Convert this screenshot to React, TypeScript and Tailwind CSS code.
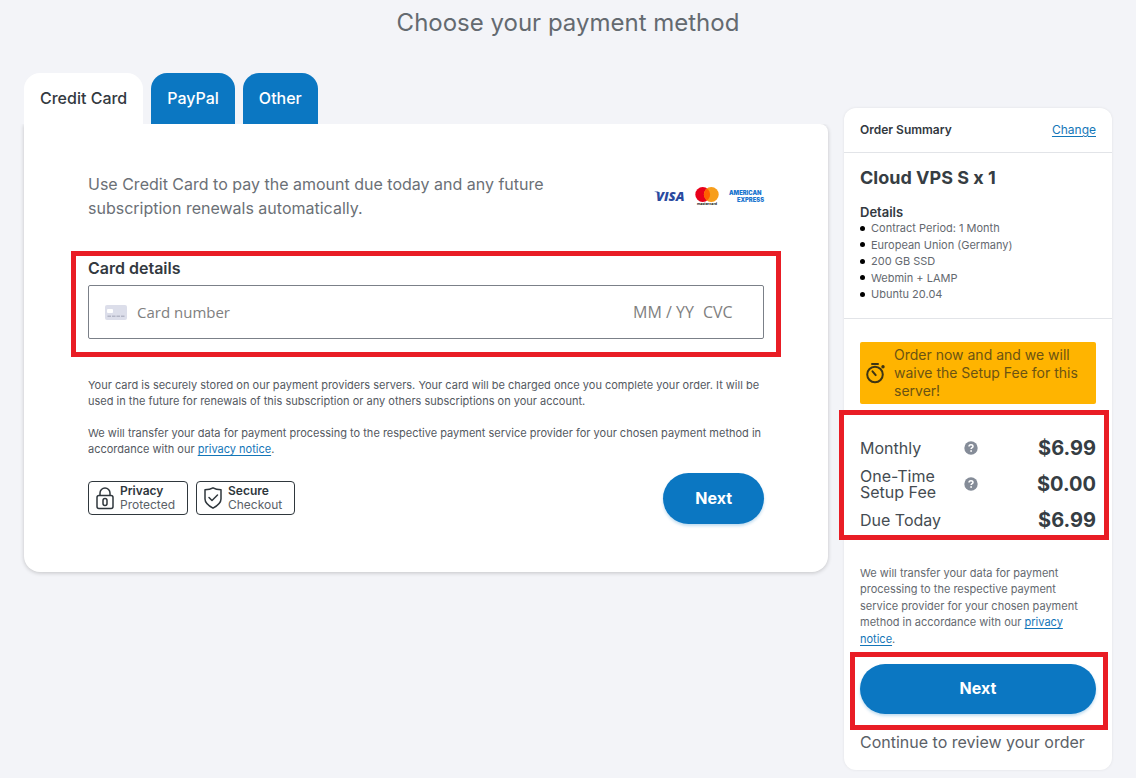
import type { ReactNode } from "react";
import clsx from "clsx";

const tabs = ["Credit Card", "PayPal", "Other"];

const details = [
  "Contract Period: 1 Month",
  "European Union (Germany)",
  "200 GB SSD",
  "Webmin + LAMP",
  "Ubuntu 20.04",
];

function Highlight({ className }: { className: string }) {
  return (
    <span
      aria-hidden="true"
      className={clsx("pointer-events-none absolute z-10 border-5 border-[#e91d25]", className)}
    />
  );
}

function VisaLogo() {
  return (
    <svg width="31" height="12" viewBox="0 0 31 12" aria-label="Visa" role="img" className="overflow-visible">
      <text
        x="2"
        y="11"
        fontFamily="'Open Sans', sans-serif"
        fontSize="13"
        fontWeight="800"
        fontStyle="italic"
        fill="#2a4a9f"
      >
        VISA
      </text>
      <path d="M0 1.600h4.200l1.300 2.600C4 2.800 2.100 2.100 0 1.600z" fill="#2a4a9f" />
    </svg>
  );
}

function MastercardLogo() {
  return (
    <svg width="24" height="20" viewBox="0 0 24 20" aria-label="Mastercard" role="img" className="overflow-visible">
      <circle cx="7.700" cy="8.500" r="7.400" fill="#e8001b" />
      <circle cx="16.300" cy="8.500" r="7.400" fill="#f79e1b" />
      <path d="M12 2.500a7.400 7.400 0 0 1 0 12a7.400 7.400 0 0 1 0-12z" fill="#ff5f00" />
      <text
        x="12"
        y="19"
        textAnchor="middle"
        fontFamily="Inter, sans-serif"
        fontSize="3.600"
        fontWeight="700"
        fill="#231f20"
      >
        mastercard
      </text>
    </svg>
  );
}

function AmexLogo() {
  return (
    <svg width="35" height="14" viewBox="0 0 35 14" aria-label="American Express" role="img" className="overflow-visible">
      <g fontFamily="Inter, sans-serif" fontSize="5.800" fontWeight="900" fill="#1a75cf">
        <text x="0" y="5.500">AMERICAN</text>
        <text x="35" y="12.500" textAnchor="end">EXPRESS</text>
      </g>
    </svg>
  );
}

function CardIcon() {
  return (
    <svg width="22" height="15" viewBox="0 0 22 15" aria-hidden="true" className="shrink-0">
      <rect width="22" height="15" rx="2" fill="#dcdeea" />
      <rect x="2" y="4" width="6" height="4" rx="1" fill="#fff" />
      <path d="M2.500 11.200h17" stroke="#b3b6c6" strokeWidth="1.500" strokeDasharray="3.500 1" />
    </svg>
  );
}

function LockIcon() {
  return (
    <svg width="18" height="24" viewBox="0 0 18 24" fill="none" stroke="#2f373d" strokeWidth="1.500" aria-hidden="true">
      <rect x="1" y="9.500" width="16" height="13" rx="2" />
      <path d="M4 9.500V7a5 5 0 0 1 10 0v2.500" />
      <rect x="7" y="12.500" width="4" height="7" rx="2" />
    </svg>
  );
}

function ShieldIcon() {
  return (
    <svg
      width="18"
      height="24"
      viewBox="0 0 18 24"
      fill="none"
      stroke="#2f373d"
      strokeWidth="1.500"
      strokeLinecap="round"
      strokeLinejoin="round"
      aria-hidden="true"
    >
      <path d="M9 1.800C6.800 3.200 4 3.700 1 3.700v9.300c0 4 4 7 8 9.200c4-2.200 8-5.200 8-9.200V3.700c-3 0-5.800-.5-8-1.900z" />
      <path d="M5 11.500l3 3l5.500-5.500" />
    </svg>
  );
}

function StopwatchIcon() {
  return (
    <svg width="20" height="22" viewBox="0 0 20 22" fill="none" stroke="#3d3514" strokeWidth="2" aria-hidden="true" className="shrink-0">
      <circle cx="9" cy="12.500" r="7.800" />
      <path d="M6 2h6" strokeLinecap="round" />
      <circle cx="17" cy="4.800" r="1.700" fill="#3d3514" stroke="none" />
      <path d="M6.500 9.300l3.200 3.800" strokeLinecap="round" />
    </svg>
  );
}

function HelpIcon() {
  return (
    <svg width="14" height="14" viewBox="0 0 14 14" aria-hidden="true">
      <circle cx="7" cy="7" r="6.700" fill="#858c98" />
      <path
        d="M5 5.600c0-1.200.9-1.900 2-1.900s2 .7 2 1.700c0 1.300-1.900 1.300-1.900 2.700"
        fill="none"
        stroke="#fff"
        strokeWidth="1.500"
      />
      <circle cx="7.100" cy="10" r=".9" fill="#fff" />
    </svg>
  );
}

function Badge({ icon, title, text }: { icon: ReactNode; title: string; text: string }) {
  return (
    <div className="flex h-[34px] items-center gap-1.5 rounded border border-[#2f373d] pr-3 pl-[7px]">
      {icon}
      <p className="text-[12px] leading-[14px] text-[#5b6167]">
        <strong className="block font-semibold text-[#2f373d]">{title}</strong>
        {text}
      </p>
    </div>
  );
}

function PriceRow({ label, price, help }: { label: string; price: string; help?: boolean }) {
  return (
    <div className="grid grid-cols-[104px_14px_1fr] items-center">
      <dt className="w-[84px] text-[16px] leading-4 text-[#454c52]">{label}</dt>
      <dd className="flex">
        {help && (
          <button type="button" aria-label={`About ${label}`}>
            <HelpIcon />
          </button>
        )}
      </dd>
      <dd className="text-right text-[20px] leading-6 font-bold text-[#363d43]">{price}</dd>
    </div>
  );
}

function PrivacyLink() {
  return (
    <a href="#privacy" className="text-[#1476b8] underline underline-offset-2">
      privacy notice
    </a>
  );
}

const inputStyle =
  "min-w-0 bg-transparent font-['Open_Sans','Noto_Sans',sans-serif] text-[#808080] outline-none placeholder:text-[#808080]";
const nextStyle =
  "rounded-full bg-[#0b77c2] pb-0.5 text-[16px] font-bold text-white shadow-[0_2px_3px_rgba(11,119,194,0.25)]";

export default function App() {
  return (
    <div className="min-h-screen bg-[#f3f4f8] px-6 pt-[7px] pb-2 font-['Inter',sans-serif] text-[#33393f]">
      <h1 className="text-center text-[24px] leading-8 text-[#646a70]">Choose your payment method</h1>

      <div className="mt-[34px] flex items-start gap-4">
        <main className="min-w-0 flex-1">
          <div role="tablist" className="flex gap-2">
            {tabs.map((tab, i) => (
              <button
                key={tab}
                type="button"
                role="tab"
                aria-selected={i === 0}
                className={clsx(
                  "h-[51px] rounded-t-2xl px-4 pb-0.5 text-[16px] font-medium",
                  i === 0 ? "bg-white text-[#33393f]" : "bg-[#0b77c2] text-white",
                )}
              >
                {tab}
              </button>
            ))}
          </div>

          <form className="rounded-b-2xl rounded-tr-lg bg-white px-16 py-12 shadow-[0_1px_4px_rgba(0,0,0,0.2)] [clip-path:inset(0_-8px_-8px_-8px)]">
            <div className="flex items-center justify-between">
              <p className="max-w-[480px] text-[16px] leading-6 text-[#6b7076]">
                Use Credit Card to pay the amount due today and any future subscription renewals automatically.
              </p>
              <div className="flex items-center gap-2.5">
                <VisaLogo />
                <MastercardLogo />
                <AmexLogo />
              </div>
            </div>

            <div className="relative mt-9">
              <Highlight className="-top-[5px] -right-[17px] -bottom-[18px] -left-[17px]" />
              <label htmlFor="card-number" className="block text-[16px] leading-6 font-semibold">
                Card details
              </label>
              <div className="mt-[5px] flex h-[54px] items-center rounded-xs border border-[#7b8088] px-4">
                <CardIcon />
                <input
                  id="card-number"
                  placeholder="Card number"
                  className={clsx(inputStyle, "ml-2.5 flex-1 text-[15px]")}
                />
                <input
                  aria-label="Expiry date"
                  placeholder="MM / YY"
                  className={clsx(inputStyle, "w-[70px] text-[16px]")}
                />
                <input aria-label="Security code" placeholder="CVC" className={clsx(inputStyle, "w-11 text-[16px]")} />
              </div>
            </div>

            <div className="mt-[38px] space-y-4 text-[11px] leading-4 text-[#54595f]">
              <p>
                Your card is securely stored on our payment providers servers. Your card will be charged once you
                complete your order. It will be used in the future for renewals of this subscription or any others
                subscriptions on your account.
              </p>
              <p>
                We will transfer your data for payment processing to the respective payment service provider for your
                chosen payment method in accordance with our <PrivacyLink />.
              </p>
            </div>

            <div className="mt-4 flex items-start justify-between">
              <div className="flex gap-2 pt-2">
                <Badge icon={<LockIcon />} title="Privacy" text="Protected" />
                <Badge icon={<ShieldIcon />} title="Secure" text="Checkout" />
              </div>
              <button type="button" className={clsx(nextStyle, "h-[51px] px-8")}>
                Next
              </button>
            </div>
          </form>
        </main>

        <aside className="mt-[35px] w-[268px] shrink-0 rounded-xl bg-white pb-4 shadow-[0_0_3px_rgba(0,0,0,0.08)]">
          <header className="flex h-[45px] items-center justify-between border-b border-[#e2e4e8] px-4">
            <h2 className="text-[12px] font-semibold">Order Summary</h2>
            <a href="#change" className="text-[12px] text-[#1476b8] underline underline-offset-2">
              Change
            </a>
          </header>

          <section className="border-b border-[#e2e4e8] px-4 pt-[11px] pb-[15px]">
            <h3 className="text-[18px] leading-7 font-bold text-[#363d43]">Cloud VPS S x 1</h3>
            <h4 className="mt-3 text-[13px] leading-4 font-semibold">Details</h4>
            <ul className="text-[11px] leading-normal text-[#64696f]">
              {details.map((item) => (
                <li key={item} className="flex items-center gap-1.5">
                  <span className="size-[5px] rounded-full bg-black" />
                  {item}
                </li>
              ))}
            </ul>
          </section>

          <div className="px-4 pt-[23px]">
            <div className="flex items-center gap-2 rounded-xs bg-[#ffb400] px-1.5 py-1">
              <StopwatchIcon />
              <p className="text-[14px] leading-[18px] text-[#6b5313]">
                Order now and and we will waive the Setup Fee for this server!
              </p>
            </div>

            <dl className="relative mt-8 space-y-2">
              <Highlight className="-top-[26px] -right-[13px] -bottom-[16px] -left-[21px]" />
              <PriceRow label="Monthly" price="$6.99" help />
              <PriceRow label="One-Time Setup Fee" price="$0.00" help />
              <PriceRow label="Due Today" price="$6.99" />
            </dl>

            <p className="mt-[33px] text-[11px] leading-normal text-[#64696f]">
              We will transfer your data for payment processing to the respective payment service provider for your
              chosen payment method in accordance with our <PrivacyLink />.
            </p>

            <div className="relative mt-[17px]">
              <Highlight className="-top-[12px] -right-[12px] -bottom-[16px] -left-[10px]" />
              <button type="button" className={clsx(nextStyle, "h-[50px] w-full")}>
                Next
              </button>
            </div>
            <p className="mt-4 text-[16px] leading-6 text-[#5b6167]">Continue to review your order</p>
          </div>
        </aside>
      </div>
    </div>
  );
}
